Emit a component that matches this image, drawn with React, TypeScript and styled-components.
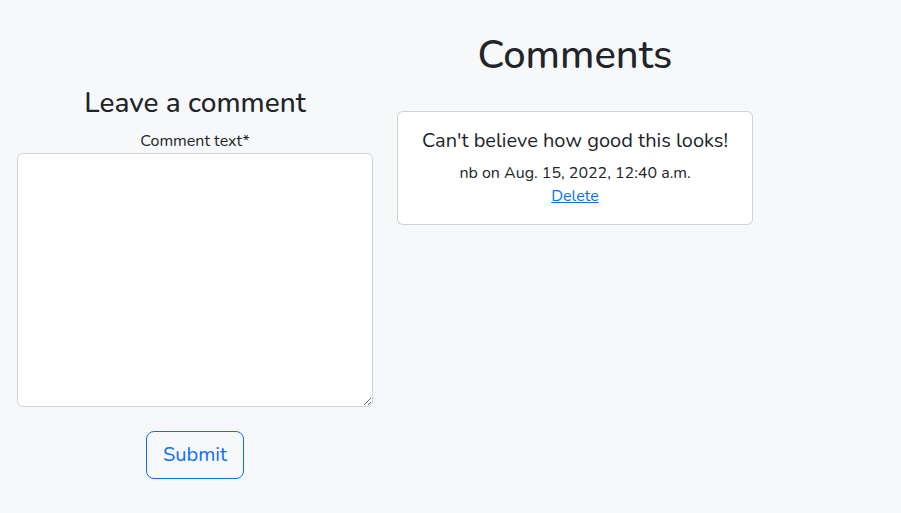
import React from "react";
import styled, { createGlobalStyle } from "styled-components";

const Global = createGlobalStyle`
  html, body { margin: 0; padding: 0; background: #f7f8fa; }
  body { font-family: "Nunito", Lato, "Noto Sans", sans-serif; color: #212529; }
  * { box-sizing: border-box; }
`;

const Page = styled.div`
  display: flex;
  align-items: flex-start;
  gap: 24px;
  padding: 0 17px;
  min-height: 513px;
`;

const Column = styled.div<{ $top: number }>`
  width: 356px;
  display: flex;
  flex-direction: column;
  align-items: center;
  padding-top: ${(p) => p.$top}px;
`;

const BigTitle = styled.h1`
  margin: 0 0 32px;
  font-size: 40px;
  font-weight: 500;
  line-height: 1.2;
`;

const SubTitle = styled.h3`
  margin: 0 0 8px;
  font-size: 28px;
  font-weight: 500;
  line-height: 1.2;
`;

const Label = styled.label`
  font-size: 16px;
  line-height: 1.5;
  margin-bottom: 0;
`;

const TextArea = styled.textarea`
  width: 356px;
  height: 254px;
  border: 1px solid #ced4da;
  border-radius: 6px;
  background: #fff;
  font: inherit;
  resize: vertical;
  display: block;
`;

const SubmitButton = styled.button`
  margin-top: 24px;
  font-family: inherit;
  font-size: 20px;
  line-height: 1.5;
  padding: 8px 16px;
  color: #0d6efd;
  background: transparent;
  border: 1px solid #0d6efd;
  border-radius: 8px;
`;

const Card = styled.div`
  width: 356px;
  background: #fff;
  border: 1px solid rgba(0, 0, 0, 0.175);
  border-radius: 6px;
  padding: 16px 16px 16px;
  display: flex;
  flex-direction: column;
  align-items: center;
`;

const CommentBody = styled.p`
  margin: 0 0 7px;
  font-size: 20px;
  line-height: 26px;
`;

const Meta = styled.p`
  margin: 0;
  font-size: 16px;
  line-height: 24px;
`;

const DeleteLink = styled.a`
  font-size: 16px;
  line-height: 23px;
  color: #0d6efd;
  text-decoration: underline;
  cursor: pointer;
`;

export default function App() {
  return (
    <>
      <Global />
      <Page>
        <Column $top={87}>
          <SubTitle>Leave a comment</SubTitle>
          <Label htmlFor="c">Comment text*</Label>
          <TextArea id="c" />
          <SubmitButton>Submit</SubmitButton>
        </Column>
        <Column $top={31}>
          <BigTitle>Comments</BigTitle>
          <Card>
            <CommentBody>Can't believe how good this looks!</CommentBody>
            <Meta>nb on Aug. 15, 2022, 12:40 a.m.</Meta>
            <DeleteLink>Delete</DeleteLink>
          </Card>
        </Column>
      </Page>
    </>
  );
}
